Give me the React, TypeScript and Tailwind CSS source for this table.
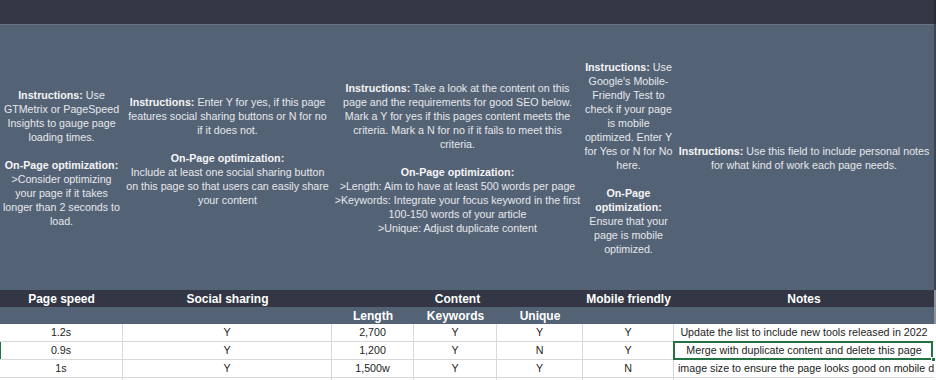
const font = { fontFamily: '"Liberation Sans", Arial, sans-serif' };

type Line = { b?: string; t?: string };

const instructions: Line[][] = [
  [
    { b: 'Instructions:', t: ' Use' },
    { t: 'GTMetrix or PageSpeed' },
    { t: 'Insights to gauge page' },
    { t: 'loading times.' },
    {},
    { b: 'On-Page optimization:' },
    { t: '>Consider optimizing' },
    { t: 'your page if it takes' },
    { t: 'longer than 2 seconds to' },
    { t: 'load.' },
  ],
  [
    { b: 'Instructions:', t: ' Enter Y for yes, if this page' },
    { t: 'features social sharing buttons or N for no' },
    { t: 'if it does not.' },
    {},
    { b: 'On-Page optimization:' },
    { t: 'Include at least one social sharing button' },
    { t: 'on this page so that users can easily share' },
    { t: 'your content' },
    {},
  ],
  [
    { b: 'Instructions:', t: ' Take a look at the content on this' },
    { t: 'page and the requirements for good SEO below.' },
    { t: 'Mark a Y for yes if this pages content meets the' },
    { t: 'criteria. Mark a N for no if it fails to meet this' },
    { t: 'criteria.' },
    {},
    { b: 'On-Page optimization:' },
    { t: '>Length: Aim to have at least 500 words per page' },
    { t: '>Keywords: Integrate your focus keyword in the first' },
    { t: '100-150 words of your article' },
    { t: '>Unique: Adjust duplicate content' },
  ],
  [
    { b: 'Instructions:', t: ' Use' },
    { t: "Google's Mobile-" },
    { t: 'Friendly Test to' },
    { t: 'check if your page' },
    { t: 'is mobile' },
    { t: 'optimized. Enter Y' },
    { t: 'for Yes or N for No' },
    { t: 'here.' },
    {},
    { b: 'On-Page' },
    { b: 'optimization:' },
    { t: 'Ensure that your' },
    { t: 'page is mobile' },
    { t: 'optimized.' },
  ],
  [
    { b: 'Instructions:', t: ' Use this field to include personal notes' },
    { t: 'for what kind of work each page needs.' },
  ],
];

const instrWidths = ['w-[123px]', 'w-[209px]', 'w-[251px]', 'w-[91px]', 'w-[260px]'];

const rows = [
  { speed: '1.2s', social: 'Y', length: '2,700', keywords: 'Y', unique: 'Y', mobile: 'Y', notes: 'Update the list to include new tools released in 2022', selected: false, left: false },
  { speed: '0.9s', social: 'Y', length: '1,200', keywords: 'Y', unique: 'N', mobile: 'Y', notes: 'Merge with duplicate content and delete this page', selected: true, left: false },
  { speed: '1s', social: 'Y', length: '1,500w', keywords: 'Y', unique: 'Y', mobile: 'N', notes: 'image size to ensure the page looks good on mobile devices', selected: false, left: true },
];

function InstructionCell({ lines, width }: { lines: Line[]; width: string }) {
  return (
    <div className={`${width} flex shrink-0 items-center justify-center`}>
      <div className="whitespace-nowrap text-center text-[10.7px] leading-[14px] text-[#e6e8ec]">
        {lines.map((line, i) => (
          <div key={i} className="h-[14px]">
            {line.b ? <span className="font-bold text-[#f4f5f7]">{line.b}</span> : null}
            {line.t}
          </div>
        ))}
      </div>
    </div>
  );
}

function DataCell({ width, children }: { width: string; children: React.ReactNode }) {
  return (
    <div
      className={`${width} flex h-[18px] shrink-0 items-center justify-center border-b border-r border-[#d9d9d9] text-[10.7px] text-[#1c1c1c]`}
    >
      {children}
    </div>
  );
}

export default function App() {
  return (
    <div className="h-[380px] w-[936px] overflow-hidden bg-white" style={font}>
      <div className="flex">
        <div className="w-[934px] shrink-0">
          <div className="h-[24px] bg-[#343744]" />
          <div className="h-px bg-[#6a7282]" />
          <div className="flex h-[265px] bg-[#546275]">
            {instructions.map((lines, i) => (
              <InstructionCell key={i} lines={lines} width={instrWidths[i]} />
            ))}
          </div>

          <div className="flex h-[17px] items-center bg-[#333644] text-[12px] font-bold text-white">
            <div className="w-[123px] text-center">Page speed</div>
            <div className="w-[209px] text-center">Social sharing</div>
            <div className="w-[251px] text-center">Content</div>
            <div className="w-[91px] text-center">Mobile friendly</div>
            <div className="w-[260px] text-center">Notes</div>
          </div>
          <div className="flex h-[17px] items-center bg-[#546275] text-[12px] font-bold text-white">
            <div className="w-[332px]" />
            <div className="w-[82px] text-center">Length</div>
            <div className="w-[83px] text-center">Keywords</div>
            <div className="w-[86px] text-center">Unique</div>
          </div>

          {rows.map((row) => (
            <div key={row.speed} className="relative flex">
              {row.selected ? <div className="absolute left-0 top-0 h-[17px] w-px bg-[#217346]" /> : null}
              <DataCell width="w-[123px]">{row.speed}</DataCell>
              <DataCell width="w-[209px]">{row.social}</DataCell>
              <DataCell width="w-[82px]">{row.length}</DataCell>
              <DataCell width="w-[83px]">{row.keywords}</DataCell>
              <DataCell width="w-[86px]">{row.unique}</DataCell>
              <DataCell width="w-[91px]">{row.mobile}</DataCell>
              <div
                className={`flex h-[18px] w-[260px] shrink-0 items-center overflow-hidden whitespace-nowrap border-b border-[#d9d9d9] text-[10.7px] text-[#1c1c1c] ${
                  row.left ? 'justify-start pl-[4px]' : 'justify-center'
                }`}
              >
                {row.notes}
              </div>
              {row.selected ? (
                <>
                  <div className="pointer-events-none absolute left-[673px] top-[-1px] h-[19px] w-[260px] border-2 border-[#217346]" />
                  <div className="absolute left-[931px] top-[15px] h-[5px] w-[5px] border border-white bg-[#217346]" />
                </>
              ) : null}
            </div>
          ))}
          <div className="flex h-[4px]">
            <div className="w-[123px] border-r border-[#d9d9d9]" />
            <div className="w-[209px] border-r border-[#d9d9d9]" />
            <div className="w-[82px] border-r border-[#d9d9d9]" />
            <div className="w-[83px] border-r border-[#d9d9d9]" />
            <div className="w-[86px] border-r border-[#d9d9d9]" />
            <div className="w-[91px] border-r border-[#d9d9d9]" />
          </div>
        </div>
        <div className="flex w-[2px] flex-col">
          <div className="h-[24px] bg-[#2a2c35]" />
          <div className="h-[266px] bg-[#3d4452]" />
          <div className="h-[34px] bg-[#8d929b]" />
          <div className="flex-1 bg-white" />
        </div>
      </div>
    </div>
  );
}
